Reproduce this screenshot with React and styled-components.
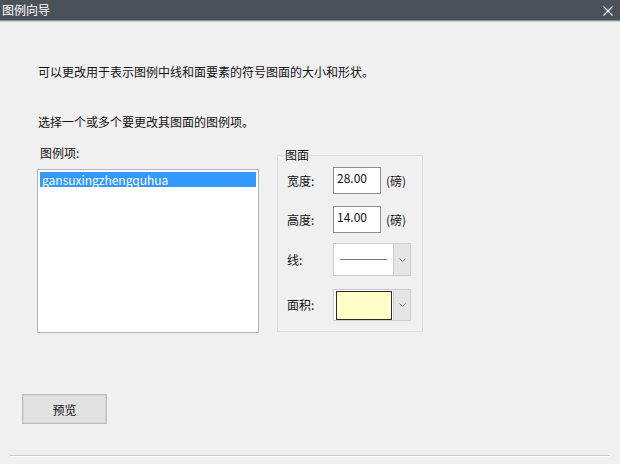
import React from 'react'
import styled, { createGlobalStyle } from 'styled-components'

const GlobalStyle = createGlobalStyle`
    html, body {
        margin: 0;
        padding: 0;
        background: #f0f0f0;
    }
    body {
        font-family: 'Noto Sans CJK SC', 'Microsoft YaHei', sans-serif;
        font-size: 12px;
        color: #111;
    }
`;

const Window = styled.div`
    width: 620px;
    height: 464px;
    display: flex;
    flex-direction: column;
    background: #f0f0f0;
    overflow: hidden;
`;

const TitleBar = styled.div`
    height: 20px;
    flex-shrink: 0;
    display: flex;
    align-items: center;
    justify-content: space-between;
    padding: 0 7px 0 2px;
    background: #4b5158;
    border-bottom: 1px solid #8a8f95;
    box-shadow: 0 1px 0 #d2d2d2;
    color: #fff;
    line-height: 20px;
`;

const CloseButton = styled.div`
    width: 10px;
    height: 10px;
    display: flex;
    margin-top: 1px;
`;

const Body = styled.div`
    flex: 1;
    display: flex;
    flex-direction: column;
    padding: 0 22px;
`;

const Top = styled.div`
    display: flex;
    flex-direction: column;
    padding-left: 15px;
`;

const Line = styled.div`
    line-height: 16px;
    margin-left: 1px;
    margin-top: ${p => p.$top}px;
`;

const Row = styled.div`
    display: flex;
    flex-direction: row;
    align-items: flex-start;
    margin-top: 15px;
    gap: 18px;
`;

const LeftCol = styled.div`
    display: flex;
    flex-direction: column;
`;

const Label = styled.div`
    line-height: 16px;
    margin-left: 3px;
    margin-bottom: 8px;
`;

const ListBox = styled.div`
    width: 222px;
    height: 164px;
    box-sizing: border-box;
    background: #fff;
    border: 1px solid #b4b4b4;
    padding: 2px;
`;

const ListItem = styled.div`
    height: 15px;
    line-height: 15px;
    padding-left: 2px;
    background: ${p => (p.$selected ? '#3399ff' : 'transparent')};
    color: ${p => (p.$selected ? '#fff' : '#111')};
`;

const Group = styled.fieldset`
    margin: 2px 0 0 0;
    width: 146px;
    box-sizing: border-box;
    border: 1px solid #dcdcdc;
    padding: 4px 0 10px 9px;
    min-width: 0;
`;

const Legend = styled.legend`
    padding: 0 1px;
    margin-left: -3px;
    line-height: 16px;
`;

const Field = styled.div`
    display: flex;
    flex-direction: row;
    align-items: center;
    margin-top: ${p => p.$top || 0}px;
`;

const FieldLabel = styled.div`
    width: 46px;
    line-height: 16px;
`;

const TextBox = styled.div`
    width: 48px;
    height: 27px;
    box-sizing: border-box;
    background: #fff;
    border: 1px solid #8c8c8c;
    padding: 3px 0 0 3px;
    line-height: 14px;
`;

const Unit = styled.div`
    margin-left: 5px;
    line-height: 16px;
`;

const Combo = styled.div`
    width: 78px;
    height: ${p => p.$h}px;
    box-sizing: border-box;
    display: flex;
    flex-direction: row;
    border: 1px solid #cccccc;
    background: #fff;
`;

const ComboValue = styled.div`
    flex: 1;
    display: flex;
    align-items: center;
    padding: 0 6px;
`;

const Swatch = styled.div`
    flex: 1;
    margin: 1px 1px 0 2px;
    background: #ffffc8;
    border: 1px solid #2b2b2b;
`;

const StrokeSample = styled.div`
    flex: 1;
    height: 1px;
    background: #7a7a7a;
`;

const ComboArrow = styled.div`
    width: 16px;
    flex-shrink: 0;
    display: flex;
    align-items: center;
    justify-content: center;
    background: #e5e5e5;
    border-left: 1px solid #cccccc;
`;

const Button = styled.button`
    width: 85px;
    height: 30px;
    margin-top: 61px;
    font: inherit;
    color: #111;
    background: #e1e1e1;
    border: 1px solid #bdbdbd;
    box-shadow: inset 0 0 0 1px #d4d4d4;
    padding: 0;
`;

const Separator = styled.div`
    margin: 31px -12px 0 -12px;
    height: 1px;
    border-top: 1px solid #c8c8c8;
    background: #fdfdfd;
`;

function Chevron(){
    return (
        <svg width="7" height="4" viewBox="0 0 7 4">
            <path d="M0.5 0.5 L3.5 3.5 L6.5 0.5" fill="none" stroke="#6f6f6f" strokeWidth="1" />
        </svg>
    )
}

export default function App(){
    return (
        <Window>
            <GlobalStyle />
            <TitleBar>
                <span>图例向导</span>
                <CloseButton>
                    <svg width="10" height="10" viewBox="0 0 10 10">
                        <path d="M0.5 0.5 L9.5 9.5 M9.5 0.5 L0.5 9.5" stroke="#fff" strokeWidth="1.1" />
                    </svg>
                </CloseButton>
            </TitleBar>
            <Body>
                <Top>
                    <Line $top={43}>可以更改用于表示图例中线和面要素的符号图面的大小和形状。</Line>
                    <Line $top={34}>选择一个或多个要更改其图面的图例项。</Line>
                    <Row>
                        <LeftCol>
                            <Label>图例项:</Label>
                            <ListBox>
                                <ListItem $selected>gansuxingzhengquhua</ListItem>
                            </ListBox>
                        </LeftCol>
                        <Group>
                            <Legend>图面</Legend>
                            <Field>
                                <FieldLabel>宽度:</FieldLabel>
                                <TextBox>28.00</TextBox>
                                <Unit>(磅)</Unit>
                            </Field>
                            <Field $top={12}>
                                <FieldLabel>高度:</FieldLabel>
                                <TextBox>14.00</TextBox>
                                <Unit>(磅)</Unit>
                            </Field>
                            <Field $top={10}>
                                <FieldLabel>线:</FieldLabel>
                                <Combo $h={33}>
                                    <ComboValue><StrokeSample /></ComboValue>
                                    <ComboArrow><Chevron /></ComboArrow>
                                </Combo>
                            </Field>
                            <Field $top={13}>
                                <FieldLabel>面积:</FieldLabel>
                                <Combo $h={32}>
                                    <Swatch />
                                    <ComboArrow><Chevron /></ComboArrow>
                                </Combo>
                            </Field>
                        </Group>
                    </Row>
                </Top>
                <Button>预览</Button>
                <Separator />
            </Body>
        </Window>
    )
}
